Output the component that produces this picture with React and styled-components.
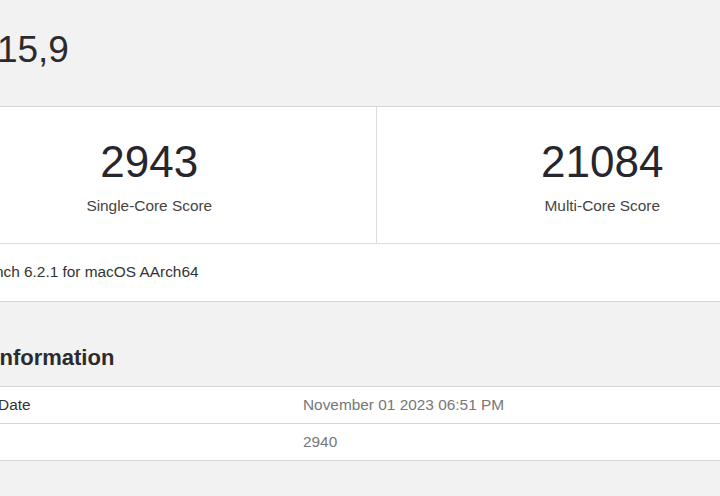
import React from 'react'
import styled, { createGlobalStyle } from "styled-components";

const GlobalStyle = createGlobalStyle`
  html, body {
    margin: 0;
    background: #f2f2f2;
    overflow: hidden;
  }

  body {
    font-family: "Liberation Sans", Arial, sans-serif;
  }
`;

const scores = [
  { value: 2943, label: "Single-Core Score" },
  { value: 21084, label: "Multi-Core Score" },
];

const info = [
  { name: "Upload Date", value: "November 01 2023 06:51 PM" },
  { name: "Views", value: "2940" },
];

function App() {
  return (
    <>
      <GlobalStyle />
      <Page>
        <Title>Mac15,9</Title>

        <Card>
          <ScoreRow>
            {scores.map(score => (
              <ScoreCell key={score.label}>
                <Score>{score.value}</Score>
                <ScoreLabel>{score.label}</ScoreLabel>
              </ScoreCell>
            ))}
          </ScoreRow>
          <Footer>Geekbench 6.2.1 for macOS AArch64</Footer>
        </Card>

        <Heading>Result Information</Heading>
        <Table>
          {info.map(row => (
            <Row key={row.name}>
              <Name>{row.name}</Name>
              <Value>{row.value}</Value>
            </Row>
          ))}
        </Table>
      </Page>
    </>
  )
}

export default App

const Page = styled.div`
  margin-left: -77px;
  width: 905px;
  padding-top: 28px;
`;

const Title = styled.h1`
  margin: 0 0 34px;
  padding-left: 4px;
  font-size: 37px;
  line-height: 44px;
  font-weight: 400;
  color: #2b2b2e;
`;

const Card = styled.div`
  background: #fff;
  border-top: 1px solid #d6d6d6;
  border-bottom: 1px solid #d6d6d6;
`;

const ScoreRow = styled.div`
  display: grid;
  grid-template-columns: 1fr 1fr;
  border-bottom: 1px solid #dcdcdc;
`;

const ScoreCell = styled.div`
  text-align: center;
  padding: 28px 0 26px;

  & + & {
    border-left: 1px solid #dcdcdc;
  }
`;

const Score = styled.div`
  font-size: 44px;
  line-height: 53px;
  color: #26262c;
`;

const ScoreLabel = styled.div`
  margin-top: 7px;
  font-size: 15.4px;
  line-height: 22px;
  color: #444;
`;

const Footer = styled.div`
  padding: 17px 22px 18px 18px;
  font-size: 15.4px;
  line-height: 22px;
  color: #333;
`;

const Heading = styled.h2`
  margin: 43px 0 15px -3px;
  font-size: 22px;
  line-height: 26px;
  font-weight: 700;
  color: #2b2b2e;
`;

const Table = styled.div`
  background: #fff;
  border-top: 1px solid #d6d6d6;
`;

const Row = styled.div`
  display: grid;
  grid-template-columns: 358px 1fr;
  border-bottom: 1px solid #d6d6d6;
  font-size: 15.4px;
  line-height: 22px;
`;

const Name = styled.div`
  padding: 7px 22px;
  color: #333;
`;

const Value = styled.div`
  padding: 7px 22px;
  color: #777;
`;
